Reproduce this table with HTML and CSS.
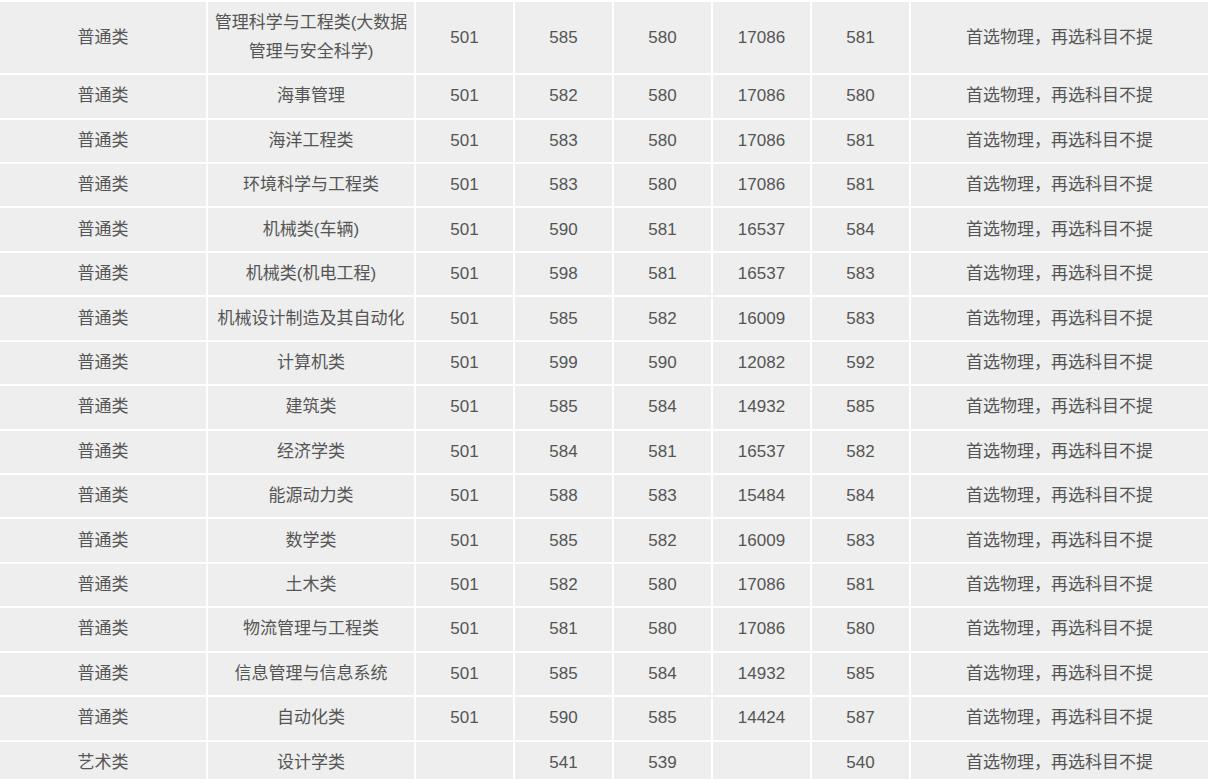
FILE: index.html
```html
<!DOCTYPE html>
<html lang="zh-CN">
<head>
<meta charset="utf-8">
<title>分数线</title>
<link rel="stylesheet" href="styles.css">
</head>
<body>
<div class="wrap">
<table class="score-table">
<colgroup>
<col class="c-wide"><col class="c-wide">
<col class="c-num"><col class="c-num"><col class="c-num"><col class="c-num"><col class="c-num">
<col class="c-note">
</colgroup>
<tbody>
<tr><td>普通类</td><td>管理科学与工程类(大数据管理与安全科学)</td><td>501</td><td>585</td><td>580</td><td>17086</td><td>581</td><td>首选物理，再选科目不提</td></tr>
<tr><td>普通类</td><td>海事管理</td><td>501</td><td>582</td><td>580</td><td>17086</td><td>580</td><td>首选物理，再选科目不提</td></tr>
<tr><td>普通类</td><td>海洋工程类</td><td>501</td><td>583</td><td>580</td><td>17086</td><td>581</td><td>首选物理，再选科目不提</td></tr>
<tr><td>普通类</td><td>环境科学与工程类</td><td>501</td><td>583</td><td>580</td><td>17086</td><td>581</td><td>首选物理，再选科目不提</td></tr>
<tr><td>普通类</td><td>机械类(车辆)</td><td>501</td><td>590</td><td>581</td><td>16537</td><td>584</td><td>首选物理，再选科目不提</td></tr>
<tr><td>普通类</td><td>机械类(机电工程)</td><td>501</td><td>598</td><td>581</td><td>16537</td><td>583</td><td>首选物理，再选科目不提</td></tr>
<tr><td>普通类</td><td>机械设计制造及其自动化</td><td>501</td><td>585</td><td>582</td><td>16009</td><td>583</td><td>首选物理，再选科目不提</td></tr>
<tr><td>普通类</td><td>计算机类</td><td>501</td><td>599</td><td>590</td><td>12082</td><td>592</td><td>首选物理，再选科目不提</td></tr>
<tr><td>普通类</td><td>建筑类</td><td>501</td><td>585</td><td>584</td><td>14932</td><td>585</td><td>首选物理，再选科目不提</td></tr>
<tr><td>普通类</td><td>经济学类</td><td>501</td><td>584</td><td>581</td><td>16537</td><td>582</td><td>首选物理，再选科目不提</td></tr>
<tr><td>普通类</td><td>能源动力类</td><td>501</td><td>588</td><td>583</td><td>15484</td><td>584</td><td>首选物理，再选科目不提</td></tr>
<tr><td>普通类</td><td>数学类</td><td>501</td><td>585</td><td>582</td><td>16009</td><td>583</td><td>首选物理，再选科目不提</td></tr>
<tr><td>普通类</td><td>土木类</td><td>501</td><td>582</td><td>580</td><td>17086</td><td>581</td><td>首选物理，再选科目不提</td></tr>
<tr><td>普通类</td><td>物流管理与工程类</td><td>501</td><td>581</td><td>580</td><td>17086</td><td>580</td><td>首选物理，再选科目不提</td></tr>
<tr><td>普通类</td><td>信息管理与信息系统</td><td>501</td><td>585</td><td>584</td><td>14932</td><td>585</td><td>首选物理，再选科目不提</td></tr>
<tr><td>普通类</td><td>自动化类</td><td>501</td><td>590</td><td>585</td><td>14424</td><td>587</td><td>首选物理，再选科目不提</td></tr>
<tr><td>艺术类</td><td>设计学类</td><td></td><td>541</td><td>539</td><td></td><td>540</td><td>首选物理，再选科目不提</td></tr>
</tbody>
</table>
</div>
</body>
</html>
```

FILE: styles.css
```css
html, body {
  margin: 0;
  padding: 0;
  background: #ffffff;
  overflow: hidden;
}

.wrap {
  width: 1208px;
  overflow: hidden;
}

.score-table {
  margin-left: -2px;
  width: 1212px;
  table-layout: fixed;
  border-collapse: separate;
  border-spacing: 2px;
  font-family: "Liberation Sans", "Noto Sans CJK SC", sans-serif;
  font-size: 17px;
  color: #555555;
}

.c-wide { width: 206px; }
.c-num { width: 97px; }
.c-note { width: 297px; }

.score-table td {
  background: #eeeeee;
  text-align: center;
  vertical-align: middle;
  padding: 7.2px 5px 6.45px;
  line-height: 28.8px;
  height: 28.8px;
}
```
